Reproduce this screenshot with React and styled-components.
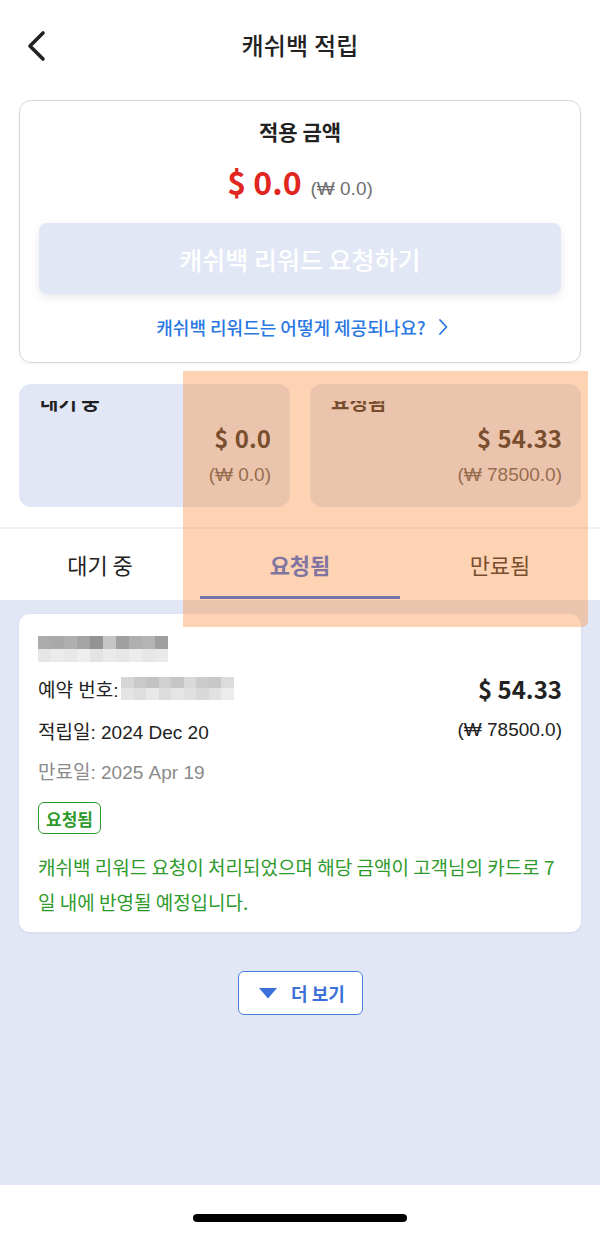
import React from "react"
import styled, { createGlobalStyle } from "styled-components"

const GlobalStyle = createGlobalStyle`
  html, body {
    margin: 0;
    padding: 0;
    background: #ffffff;
  }
  body {
    font-family: "Liberation Sans", "Noto Sans CJK KR", sans-serif;
    color: #222222;
  }
  * { box-sizing: border-box; }
`

const KR = `"Noto Sans CJK KR", "Noto Sans", sans-serif`
const MIX = `"Liberation Sans", "Noto Sans CJK KR", sans-serif`

const Page = styled.div`
  position: relative;
  width: 600px;
  min-height: 1235px;
  display: flex;
  flex-direction: column;
  background: #ffffff;
  overflow: hidden;
`
const Header = styled.header`
  height: 100px;
  display: flex;
  align-items: center;
  justify-content: center;
  position: relative;
  padding-bottom: 12px;
`
const BackButton = styled.button`
  position: absolute;
  left: 18px;
  top: 26px;
  width: 36px;
  height: 40px;
  padding: 0;
  border: 0;
  background: transparent;
  display: flex;
  align-items: center;
  justify-content: center;
`
const Title = styled.h1`
  margin: 0;
  font-family: ${KR};
  font-size: 24px;
  font-weight: 500;
  color: #222222;
  letter-spacing: 0.2px;
`
const TopCard = styled.section`
  margin: 0 19px;
  border: 1px solid #d6d7dc;
  border-radius: 12px;
  padding: 16px 19px 23px;
  display: flex;
  flex-direction: column;
  align-items: center;
  box-shadow: 0 1px 3px rgba(0, 0, 0, 0.06);
`
const CardTitle = styled.div`
  font-family: ${KR};
  font-size: 21px;
  font-weight: 700;
  line-height: 28px;
  color: #222222;
`
const AmountRow = styled.div`
  margin-top: 16px;
  height: 40px;
  display: flex;
  align-items: baseline;
  gap: 9px;
`
const RedAmount = styled.span`
  font-family: ${KR};
  font-size: 32px;
  font-weight: 700;
  color: #e0261f;
  line-height: 40px;
`
const SubAmount = styled.span`
  font-family: ${MIX};
  font-size: 19px;
  color: ${p => p.$color || "#707070"};
  line-height: 22px;
`
const RequestButton = styled.button`
  margin-top: 22px;
  width: 100%;
  height: 71px;
  border: 0;
  border-radius: 8px;
  background: #e1e7f5;
  color: #ffffff;
  font-family: ${KR};
  font-size: 25px;
  font-weight: 500;
  box-shadow: 0 3px 8px rgba(60, 70, 100, 0.12);
`
const HelpLink = styled.a`
  margin-top: 21px;
  display: flex;
  align-items: center;
  gap: 12px;
  font-family: ${KR};
  font-size: 18px;
  font-weight: 500;
  line-height: 24px;
  color: #2a78e2;
  text-decoration: none;
  padding-left: 4px;
`
const SummaryRow = styled.div`
  margin: 21px 19px 0;
  display: grid;
  grid-template-columns: 1fr 1fr;
  gap: 20px;
`
const SummaryCard = styled.div`
  height: 123px;
  border-radius: 12px;
  background: #e1e7f5;
  padding: 17px 19px 0 21px;
  display: flex;
  flex-direction: column;
  align-items: flex-end;
  overflow: hidden;
`
const LabelClip = styled.div`
  align-self: stretch;
  height: 12px;
  overflow: hidden;
`
const SummaryLabel = styled.div`
  margin-top: -11px;
  font-family: ${KR};
  font-size: 20px;
  font-weight: 700;
  line-height: 24px;
  color: #1f1f1f;
`
const SummaryAmount = styled.div`
  margin-top: 10px;
  font-family: ${KR};
  font-size: 24px;
  font-weight: 700;
  line-height: 30px;
  color: #222222;
  word-spacing: 1px;
`
const SummarySub = styled.div`
  margin-top: 11px;
  font-family: ${MIX};
  font-size: 19px;
  line-height: 22px;
  color: #555555;
`
const Tabs = styled.nav`
  margin-top: 20px;
  border-top: 2px solid #eef0f4;
  display: grid;
  grid-template-columns: repeat(3, 1fr);
  height: 73px;
`
const Tab = styled.div`
  position: relative;
  display: flex;
  align-items: center;
  justify-content: center;
  padding-bottom: 2px;
  font-family: ${KR};
  font-size: 22px;
  font-weight: ${p => (p.$active ? 700 : 400)};
  color: ${p => (p.$active ? "#2d63e0" : "#222222")};
  &::after {
    content: "";
    display: ${p => (p.$active ? "block" : "none")};
    position: absolute;
    left: 0;
    right: 0;
    bottom: 1px;
    height: 3px;
    background: #1e5fee;
  }
`
const Content = styled.main`
  flex: 1;
  background: #e1e7f5;
  padding: 14px 19px 0;
  display: flex;
  flex-direction: column;
  align-items: center;
`
const EntryCard = styled.article`
  align-self: stretch;
  background: #ffffff;
  border-radius: 11px;
  padding: 22px 19px 13px;
  box-shadow: 0 1px 3px rgba(60, 70, 100, 0.08);
`
const Mosaic = styled.div`
  display: grid;
  grid-template-columns: repeat(${p => p.$cols}, ${p => p.$w}px);
  grid-auto-rows: ${p => p.$h}px;
`
const Cell = styled.span`
  background: ${p => p.$shade};
`
const InfoRow = styled.div`
  margin-top: ${p => p.$gap}px;
  display: flex;
  justify-content: space-between;
  align-items: center;
  height: 30px;
`
const InfoText = styled.span`
  display: flex;
  align-items: center;
  gap: 3px;
  font-family: ${MIX};
  font-size: 19px;
  color: ${p => (p.$muted ? "#8a8a8a" : "#222222")};
`
const EntryAmount = styled.span`
  font-family: ${KR};
  font-size: 24px;
  font-weight: 700;
  color: #222222;
`
const Badge = styled.span`
  margin-top: 17px;
  display: inline-flex;
  align-items: center;
  height: 32px;
  padding: 0 7px;
  border: 1.5px solid #2f9a2c;
  border-radius: 6px;
  font-family: ${KR};
  font-size: 17px;
  font-weight: 700;
  color: #2f9a2c;
`
const StatusText = styled.p`
  margin: 15px 0 0;
  font-family: ${KR};
  font-size: 19px;
  line-height: 35px;
  color: #2f9a2c;
`
const MoreButton = styled.button`
  margin-top: 39px;
  width: 125px;
  height: 44px;
  border: 1.5px solid #4a7fe0;
  border-radius: 6px;
  background: #ffffff;
  display: flex;
  align-items: center;
  justify-content: center;
  gap: 14px;
  padding: 0 0 0 4px;
  font-family: ${KR};
  font-size: 18px;
  font-weight: 700;
  color: #3c6fd8;
`
const HomeBar = styled.footer`
  height: 50px;
  background: #ffffff;
  display: flex;
  justify-content: center;
  padding-top: 29px;
`
const HomeIndicator = styled.span`
  width: 214px;
  height: 8px;
  border-radius: 4px;
  background: #000000;
`
const Highlight = styled.div`
  position: absolute;
  left: 183px;
  top: 371px;
  width: 405px;
  height: 256px;
  background: rgba(250, 145, 65, 0.4);
  border-bottom-right-radius: 6px;
  pointer-events: none;
`

const nameShades = [
  "#ababab", "#a9a9a9", "#afafaf", "#a4a4a4", "#939393", "#c6c6c6", "#a0a0a0", "#afafaf", "#b4b4b4", "#9f9f9f",
  "#e6e6e6", "#ebebeb", "#e8e8e8", "#eeeeee", "#e4e4e4", "#eaeaea", "#e7e7e7", "#ececec", "#e6e6e6", "#eaeaea",
]
const bookingShades = [
  "#d6d6d6", "#c9c9c9", "#c3c3c3", "#d0d0d0", "#c6c6c6", "#d9d9d9", "#cbcbcb", "#c8c8c8", "#dcdcdc",
  "#e4e4e4", "#dedede", "#e8e8e8", "#dcdcdc", "#e5e5e5", "#e0e0e0", "#d8d8d8", "#e2e2e2", "#ececec",
]

function Chevron() {
  return (
    <svg width="24" height="34" viewBox="0 0 24 34">
      <polyline points="19,4 6,17 19,30" fill="none" stroke="#222" strokeWidth="3.6" strokeLinecap="round" strokeLinejoin="round" />
    </svg>
  )
}

export default function App() {
  return (
    <Page>
      <GlobalStyle />
      <Header>
        <BackButton aria-label="back"><Chevron /></BackButton>
        <Title>캐쉬백 적립</Title>
      </Header>

      <TopCard>
        <CardTitle>적용 금액</CardTitle>
        <AmountRow>
          <RedAmount>$ 0.0</RedAmount>
          <SubAmount>(₩ 0.0)</SubAmount>
        </AmountRow>
        <RequestButton>캐쉬백 리워드 요청하기</RequestButton>
        <HelpLink>
          캐쉬백 리워드는 어떻게 제공되나요?
          <svg width="10" height="18" viewBox="0 0 10 18">
            <polyline points="2,2 8.5,9 2,16" fill="none" stroke="#2a78e2" strokeWidth="1.8" strokeLinecap="round" strokeLinejoin="round" />
          </svg>
        </HelpLink>
      </TopCard>

      <SummaryRow>
        <SummaryCard>
          <LabelClip><SummaryLabel>대기 중</SummaryLabel></LabelClip>
          <SummaryAmount>$ 0.0</SummaryAmount>
          <SummarySub>(₩ 0.0)</SummarySub>
        </SummaryCard>
        <SummaryCard>
          <LabelClip><SummaryLabel>요청됨</SummaryLabel></LabelClip>
          <SummaryAmount>$ 54.33</SummaryAmount>
          <SummarySub>(₩ 78500.0)</SummarySub>
        </SummaryCard>
      </SummaryRow>

      <Tabs>
        <Tab>대기 중</Tab>
        <Tab $active>요청됨</Tab>
        <Tab>만료됨</Tab>
      </Tabs>

      <Content>
        <EntryCard>
          <Mosaic $cols={10} $w={13} $h={13}>
            {nameShades.map((c, i) => <Cell key={i} $shade={c} />)}
          </Mosaic>
          <InfoRow $gap={11}>
            <InfoText>
              예약 번호:
              <Mosaic $cols={9} $w={12.5} $h={11.5}>
                {bookingShades.map((c, i) => <Cell key={i} $shade={c} />)}
              </Mosaic>
            </InfoText>
            <EntryAmount>$ 54.33</EntryAmount>
          </InfoRow>
          <InfoRow $gap={12}>
            <InfoText>적립일: 2024 Dec 20</InfoText>
            <SubAmount $color="#222222">(₩ 78500.0)</SubAmount>
          </InfoRow>
          <InfoRow $gap={10}>
            <InfoText $muted>만료일: 2025 Apr 19</InfoText>
          </InfoRow>
          <Badge>요청됨</Badge>
          <StatusText>캐쉬백 리워드 요청이 처리되었으며 해당 금액이 고객님의 카드로 7일 내에 반영될 예정입니다.</StatusText>
        </EntryCard>
        <MoreButton>
          <svg width="18" height="11" viewBox="0 0 18 11">
            <polygon points="0,0 18,0 9,10.5" fill="#3c6fd8" />
          </svg>
          더 보기
        </MoreButton>
      </Content>

      <HomeBar><HomeIndicator /></HomeBar>
      <Highlight />
    </Page>
  )
}
